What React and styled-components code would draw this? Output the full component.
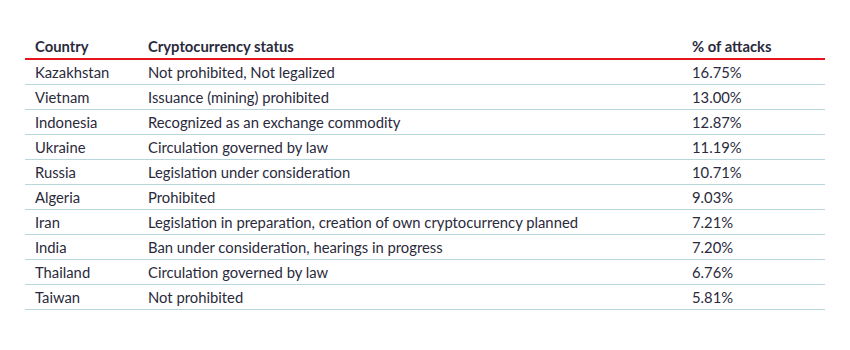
import React from "react";
import styled, { createGlobalStyle } from "styled-components";

const Global = createGlobalStyle`
  body { margin: 0; background: #fff; font-family: "Lato", "Noto Sans", sans-serif; }
`;

const Wrap = styled.div`
  padding: 35px 25px 0 25px;
`;

const Table = styled.table`
  width: 800px;
  border-collapse: collapse;
  table-layout: fixed;
  color: #2a2a3c;
  font-size: 14.8px;
`;

const Th = styled.th`
  box-sizing: border-box;
  text-align: left;
  font-weight: 700;
  padding: 0 10px 2px 10px;
  height: 24px;
  border-bottom: 2px solid #e8141b;
  width: ${(p) => p.$w}px;
`;

const Td = styled.td`
  padding: 0 10px;
  height: 24px;
  border-bottom: 1px solid #b8d7dc;
  white-space: nowrap;
`;

const rows = [
  ["Kazakhstan", "Not prohibited, Not legalized", "16.75%"],
  ["Vietnam", "Issuance (mining) prohibited", "13.00%"],
  ["Indonesia", "Recognized as an exchange commodity", "12.87%"],
  ["Ukraine", "Circulation governed by law", "11.19%"],
  ["Russia", "Legislation under consideration", "10.71%"],
  ["Algeria", "Prohibited", "9.03%"],
  ["Iran", "Legislation in preparation, creation of own cryptocurrency planned", "7.21%"],
  ["India", "Ban under consideration, hearings in progress", "7.20%"],
  ["Thailand", "Circulation governed by law", "6.76%"],
  ["Taiwan", "Not prohibited", "5.81%"],
];

export default function App() {
  return (
    <Wrap>
      <Global />
      <Table>
        <thead>
          <tr>
            <Th $w={113}>Country</Th>
            <Th $w={544}>Cryptocurrency status</Th>
            <Th $w={143}>% of attacks</Th>
          </tr>
        </thead>
        <tbody>
          {rows.map((r) => (
            <tr key={r[0]}>
              {r.map((c, i) => (
                <Td key={i}>{c}</Td>
              ))}
            </tr>
          ))}
        </tbody>
      </Table>
    </Wrap>
  );
}
